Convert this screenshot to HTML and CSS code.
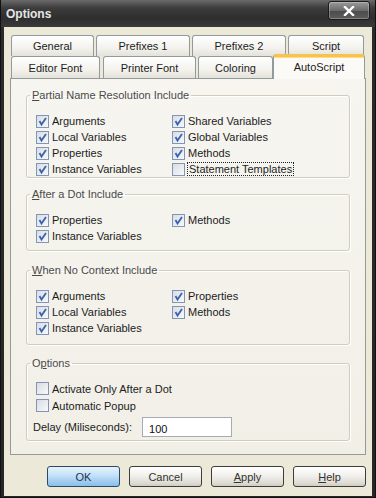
FILE: index.html
```html
<!DOCTYPE html>
<html>
<head lang="en">
    <meta charset="UTF-8">
    <title>Options</title>
    <link rel="stylesheet" href="styles.css">
</head>
<body>

<div class="window">
    <div class="titlebar">
        <span class="title">Options</span>
        <span class="close">
            <svg width="12" height="10" viewBox="0 0 12 10"><path d="M2 1 L10 9 M10 1 L2 9" stroke="#fff" stroke-width="2.4" stroke-linecap="square"/></svg>
        </span>
    </div>

    <div class="client">
        <div class="tabrow row1">
            <div class="tab">General</div>
            <div class="tab">Prefixes 1</div>
            <div class="tab">Prefixes 2</div>
            <div class="tab">Script</div>
        </div>
        <div class="tabrow row2">
            <div class="tab">Editor Font</div>
            <div class="tab">Printer Font</div>
            <div class="tab">Coloring</div>
            <div class="tab active">AutoScript</div>
        </div>

        <div class="panel">
            <fieldset class="group g1">
                <legend><u>P</u>artial Name Resolution Include</legend>
                <div class="rows cols">
                    <label class="check"><span class="cb on"><svg viewBox="0 0 11 11"><path d="M2.5 5 L4.5 8.5 L9 2"/></svg></span>Arguments</label>
                    <label class="check"><span class="cb on"><svg viewBox="0 0 11 11"><path d="M2.5 5 L4.5 8.5 L9 2"/></svg></span>Shared Variables</label>
                    <label class="check"><span class="cb on"><svg viewBox="0 0 11 11"><path d="M2.5 5 L4.5 8.5 L9 2"/></svg></span>Local Variables</label>
                    <label class="check"><span class="cb on"><svg viewBox="0 0 11 11"><path d="M2.5 5 L4.5 8.5 L9 2"/></svg></span>Global Variables</label>
                    <label class="check"><span class="cb on"><svg viewBox="0 0 11 11"><path d="M2.5 5 L4.5 8.5 L9 2"/></svg></span>Properties</label>
                    <label class="check"><span class="cb on"><svg viewBox="0 0 11 11"><path d="M2.5 5 L4.5 8.5 L9 2"/></svg></span>Methods</label>
                    <label class="check"><span class="cb on"><svg viewBox="0 0 11 11"><path d="M2.5 5 L4.5 8.5 L9 2"/></svg></span>Instance Variables</label>
                    <label class="check"><span class="cb"></span><span class="focus">Statement Templates</span></label>
                </div>
            </fieldset>

            <fieldset class="group g2">
                <legend><u>A</u>fter a Dot Include</legend>
                <div class="rows cols">
                    <label class="check"><span class="cb on"><svg viewBox="0 0 11 11"><path d="M2.5 5 L4.5 8.5 L9 2"/></svg></span>Properties</label>
                    <label class="check"><span class="cb on"><svg viewBox="0 0 11 11"><path d="M2.5 5 L4.5 8.5 L9 2"/></svg></span>Methods</label>
                    <label class="check"><span class="cb on"><svg viewBox="0 0 11 11"><path d="M2.5 5 L4.5 8.5 L9 2"/></svg></span>Instance Variables</label>
                </div>
            </fieldset>

            <fieldset class="group g3">
                <legend><u>W</u>hen No Context Include</legend>
                <div class="rows cols">
                    <label class="check"><span class="cb on"><svg viewBox="0 0 11 11"><path d="M2.5 5 L4.5 8.5 L9 2"/></svg></span>Arguments</label>
                    <label class="check"><span class="cb on"><svg viewBox="0 0 11 11"><path d="M2.5 5 L4.5 8.5 L9 2"/></svg></span>Properties</label>
                    <label class="check"><span class="cb on"><svg viewBox="0 0 11 11"><path d="M2.5 5 L4.5 8.5 L9 2"/></svg></span>Local Variables</label>
                    <label class="check"><span class="cb on"><svg viewBox="0 0 11 11"><path d="M2.5 5 L4.5 8.5 L9 2"/></svg></span>Methods</label>
                    <label class="check"><span class="cb on"><svg viewBox="0 0 11 11"><path d="M2.5 5 L4.5 8.5 L9 2"/></svg></span>Instance Variables</label>
                </div>
            </fieldset>

            <fieldset class="group g4">
                <legend>O<u>p</u>tions</legend>
                <div class="rows">
                    <label class="check"><span class="cb"></span>Activate Only After a Dot</label>
                    <label class="check"><span class="cb"></span>Automatic Popup</label>
                    <div class="delay">
                        <span>Delay (Miliseconds):</span>
                        <input type="text" class="field" value="100">
                    </div>
                </div>
            </fieldset>
        </div>

        <div class="buttons">
            <button class="btn default">OK</button>
            <button class="btn">Cancel</button>
            <button class="btn"><u>A</u>pply</button>
            <button class="btn"><u>H</u>elp</button>
        </div>
    </div>
</div>

</body>
</html>
```

FILE: styles.css
```css
*{
    margin: 0px;
    padding: 0px;
    box-sizing: border-box;
}
body{
    font-family: "Liberation Sans", Tahoma, sans-serif;
    font-size: 11px;
    color: #1c1c1c;
}
.window{
    width: 376px;
    height: 498px;
    display: flex;
    flex-direction: column;
    background: linear-gradient(#444 0px, #2a2a2a 30px, #262626);
    border-left: 1px solid #111;
    border-right: 1px solid #111;
    border-bottom: 1px solid #111;
}

/* title bar */
.titlebar{
    height: 27px;
    display: flex;
    align-items: flex-start;
    justify-content: space-between;
    padding: 0px 5px 0px 5px;
    background: linear-gradient(#6a6a6a 0px, #3c3c3c 8px, #2e2e2e 18px, #3a3a3a 27px);
}
.title{
    margin-top: 7px;
    color: #e6e6e6;
    font-weight: bold;
    font-size: 12px;
}
.close{
    width: 42px;
    height: 19px;
    margin-top: 1px;
    display: flex;
    align-items: center;
    justify-content: center;
    border: 1px solid #1c1c1c;
    border-radius: 3px;
    background: linear-gradient(#9a9a9a, #6b6b6b 50%, #4c4c4c 51%, #5c5c5c);
    box-shadow: inset 0px 0px 0px 1px rgba(255,255,255,0.25);
}

/* client */
.client{
    flex: 1;
    margin: 0px 3px 1px 3px;
    padding: 8px 6px 0px 6px;
    background: #ece9d8;
    display: flex;
    flex-direction: column;
}

/* tabs */
.tabrow{
    display: flex;
    margin-left: 1px;
}
.row1{
    height: 21px;
    gap: 2px;
}
.row2{
    height: 22px;
}
.tab{
    border: 1px solid #919b9c;
    border-bottom: none;
    border-radius: 3px 3px 0px 0px;
    background: linear-gradient(#ffffff, #f3f2ee 60%, #e4e2d9);
    display: flex;
    align-items: center;
    justify-content: center;
    color: #1c1c1c;
}
.row1 .tab:nth-child(1){ width: 83px; }
.row1 .tab:nth-child(2){ width: 94px; }
.row1 .tab:nth-child(3){ width: 94px; }
.row1 .tab:nth-child(4){ width: 76px; }
.row2 .tab:nth-child(1){ width: 89px; }
.row2 .tab:nth-child(2){ width: 93px; margin-left: 3px; }
.row2 .tab:nth-child(3){ width: 75px; margin-left: 2px; }
.tab.active{
    width: 92px;
    height: 25px;
    margin-top: -2px;
    margin-left: 0px;
    position: relative;
    z-index: 1;
    align-items: flex-start;
    padding-top: 4px;
    background: #fbfaf6;
    border-top: 3px solid #f7c250;
    box-shadow: inset 0px 1px 0px #ffdc86;
}

/* panel */
.panel{
    height: 377px;
    border: 1px solid #919b9c;
    background: linear-gradient(#f6f5f0, #f1efe6);
    padding: 10px 15px 0px 15px;
}
.group{
    border: 1px solid #d0cdbd;
    border-radius: 3px;
    box-shadow: inset 1px 1px 0px #ffffff, 1px 1px 0px #ffffff;
    padding: 0px;
}
.group legend{
    margin-left: 3px;
    padding: 0px 2px;
    line-height: 13px;
    color: #4a4a4a;
}
.g1{ height: 89px; }
.g2{ height: 63px; margin-top: 10px; }
.g3{ height: 81px; margin-top: 13px; }
.g4{ height: 84px; margin-top: 12px; }

.rows{
    padding-left: 9px;
    margin-top: 11px;
}
.g4 .rows{
    margin-top: 10px;
}
.cols{
    display: grid;
    grid-template-columns: 136px auto;
}
.check{
    height: 16px;
    display: flex;
    align-items: center;
    gap: 3px;
}
.g4 .check{
    height: 17px;
}
.cb{
    width: 13px;
    height: 13px;
    border: 1px solid #8296b3;
    background: linear-gradient(135deg, #d9dde4, #f7f8fa);
    display: flex;
    align-items: center;
    justify-content: center;
}
.cb svg{
    width: 11px;
    height: 11px;
}
.cb path{
    fill: none;
    stroke: #3a64b0;
    stroke-width: 1.8;
}
.focus{
    outline: 1px dotted #222;
    outline-offset: 0px;
    padding: 0px 1px;
}
.delay{
    display: flex;
    align-items: center;
    margin-left: -3px;
    height: 22px;
    margin-top: 2px;
}
.field{
    margin-left: 10px;
    width: 90px;
    height: 20px;
    border: 1px solid #a5acb5;
    background: #fff;
    font-family: "Liberation Sans", Tahoma, sans-serif;
    font-size: 11px;
    padding: 3px 6px 0px 6px;
    color: #111;
}

/* buttons */
.buttons{
    display: flex;
    justify-content: flex-end;
    gap: 9px;
    margin-top: 11px;
}
.btn{
    width: 73px;
    height: 21px;
    border: 1px solid #3d3d3d;
    border-radius: 3px;
    background: linear-gradient(#ffffff, #f1f0ec 45%, #dedbd2 85%, #cfccc2);
    font-family: "Liberation Sans", Tahoma, sans-serif;
    font-size: 11px;
    color: #333;
}
.btn.default{
    border-color: #2c4a66;
    background: linear-gradient(#e6f3fd, #c3e1f8 45%, #9ccaef 80%, #8bbfe9);
    color: #1f3550;
}
```
